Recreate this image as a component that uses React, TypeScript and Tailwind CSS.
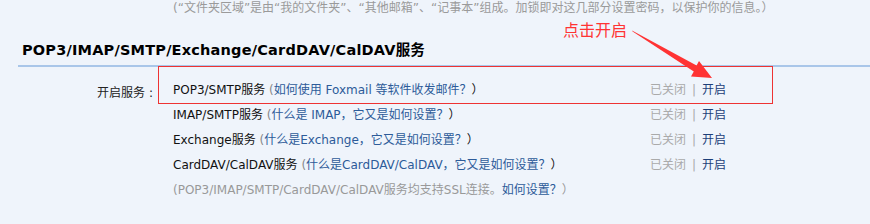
const font = "font-['DejaVu_Sans','Noto_Sans_CJK_SC',sans-serif]"

type Row = { name: string; help: string }

const rows: Row[] = [
  { name: 'POP3/SMTP服务', help: '如何使用 Foxmail 等软件收发邮件？' },
  { name: 'IMAP/SMTP服务', help: '什么是 IMAP，它又是如何设置？' },
  { name: 'Exchange服务', help: '什么是Exchange，它又是如何设置？' },
  { name: 'CardDAV/CalDAV服务', help: '什么是CardDAV/CalDAV，它又是如何设置？' },
]

function ServiceRow({ row, first }: { row: Row; first?: boolean }) {
  return (
    <div className="flex h-[25px] items-center">
      <div className="w-[153px] shrink-0 text-right text-[#222]">
        {first && (
          <span className="relative top-[3px]">
            开启服务<span className="ml-[4px]">:</span>
          </span>
        )}
      </div>
      <div className="ml-[20px] w-[477px] shrink-0 text-[#111]">
        {row.name}{' '}
        <span className="text-[#888]">(</span>
        <a className="text-[#2d5b99]">{row.help}</a>
        <span className="text-[#111]">）</span>
      </div>
      <div className="flex items-center">
        <span className="text-[#aaa]">已关闭</span>
        <span className="mx-[6px] text-[#aaa]">|</span>
        <a className="text-[#1d3f78]">开启</a>
      </div>
    </div>
  )
}

export default function App() {
  return (
    <div className={`${font} relative h-[224px] w-[870px] overflow-hidden bg-[#eff4fb] text-[12px]`}>
      <div className="h-[16px] pl-[173px] leading-[16px] text-[#9a9a9a]">
        (“文件夹区域”是由“我的文件夹”、“其他邮箱”、“记事本”组成。加锁即对这几部分设置密码，以保护你的信息。）
      </div>

      <h2 className="mt-[24px] h-[20px] pl-[22px] text-[14.5px] font-bold leading-[20px] tracking-[0.2px] text-[#000]">
        POP3/IMAP/SMTP/Exchange/CardDAV/CalDAV服务
      </h2>
      <div className="ml-[18px] mt-[5px] border-t-2 border-[#a9c6e9]" />

      <div className="pt-[11px] leading-[25px]">
        {rows.map((r, i) => (
          <ServiceRow key={r.name} row={r} first={i === 0} />
        ))}
        <div className="flex h-[25px] items-center pl-[173px] text-[#999]">
          (POP3/IMAP/SMTP/CardDAV/CalDAV服务均支持SSL连接。
          <a className="text-[#2d5b99]">如何设置？</a>）
        </div>
      </div>

      {/* annotation */}
      <div className="absolute left-[158px] top-[66px] h-[38px] w-[615px] border border-[#ee3333]" />
      <div className="absolute left-[563px] top-[21px] text-[16px] leading-[20px] text-[#ff3333]">点击开启</div>
      <svg className="absolute left-[620px] top-[20px]" width="100" height="70" viewBox="0 0 100 70">
        <polygon
          fill="#ff3333"
          points="12,10.4 12.6,11.6 73.8,51.6 71,56.5 92,58 79,41 76.6,45.6"
        />
      </svg>
    </div>
  )
}
